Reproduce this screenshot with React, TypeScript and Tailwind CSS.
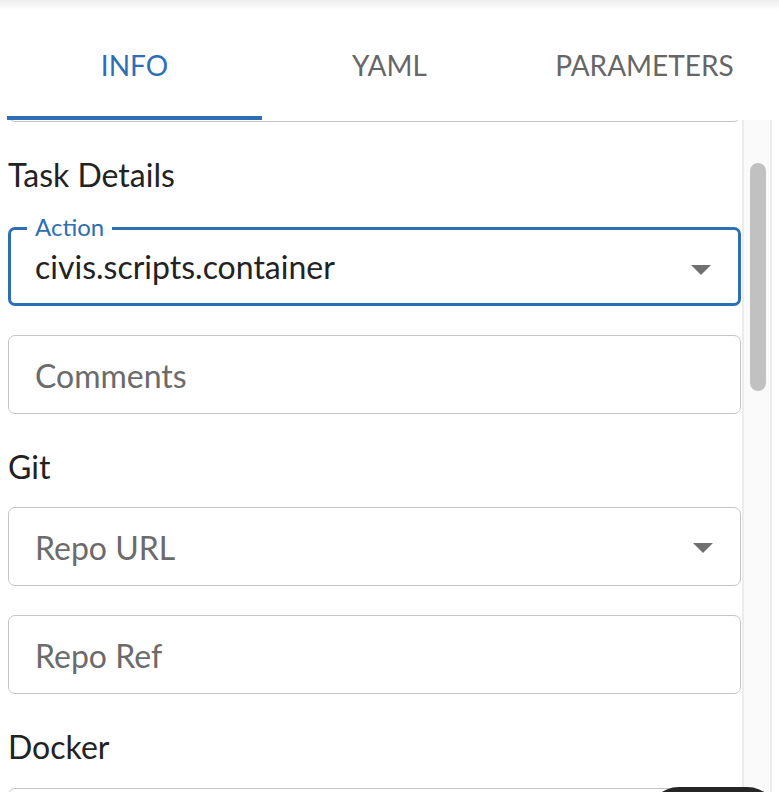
import React from 'react';

const tabs = ['INFO', 'YAML', 'PARAMETERS'];

function Caret() {
  return (
    <svg width="20" height="10" viewBox="0 0 20 10" className="absolute right-[27px] top-[35px]">
      <polygon points="0,0 20,0 10,10" fill="#707070" />
    </svg>
  );
}

interface FieldProps {
  placeholder?: string;
  value?: string;
  label?: string;
  select?: boolean;
  className?: string;
}

function Field({ placeholder, value, label, select, className = '' }: FieldProps) {
  if (label) {
    return (
      <div className={`relative h-[79px] rounded-[7px] border-[3px] border-[#2d6eb4] ${className}`}>
        <span className="absolute left-[16px] top-[-17px] bg-white px-[8px] text-[24px] leading-[28px] text-[#2d6eb4]">
          {label}
        </span>
        <div className="flex h-full items-center pl-[24px] text-[32px] text-[#222]">{value}</div>
        {select && <Caret />}
      </div>
    );
  }
  return (
    <div className={`relative h-[79px] rounded-[7px] border-[1.5px] border-[#c4c4c4] ${className}`}>
      <div className="flex h-full items-center pl-[26px] pt-[2px] text-[32px] text-[#6b6b6b]">{placeholder}</div>
      {select && <Caret />}
    </div>
  );
}

function Heading({ children, className = '' }: { children: React.ReactNode; className?: string }) {
  return <div className={`text-[32px] leading-[36px] text-[#222] ${className}`}>{children}</div>;
}

export default function App() {
  return (
    <div className="relative h-[792px] w-[779px] overflow-hidden bg-white" style={{ fontFamily: 'Lato, "Open Sans", sans-serif' }}>
      <div className="h-[10px] bg-gradient-to-b from-[#ececec] to-white" />

      <div className="flex h-[110px] pl-[7px]">
        {tabs.map((tab, i) => (
          <div key={tab} className="relative flex w-[255px] items-center justify-center">
            <span className={`text-[28px] ${i === 0 ? 'text-[#2d6eb4]' : 'text-[#666]'}`}>{tab}</span>
            {i === 0 && <div className="absolute bottom-0 left-0 h-[4px] w-full bg-[#2d6eb4]" />}
          </div>
        ))}
      </div>

      <div className="flex h-[672px]">
        <div className="flex-1 overflow-hidden pl-[8px] pr-[1px]">
          <div className="mt-[-77px] h-[79px] rounded-[7px] border-[1.5px] border-[#c4c4c4]" />
          <Heading className="mt-[35px]">Task Details</Heading>
          <Field className="mt-[34px]" label="Action" value="civis.scripts.container" select />
          <Field className="mt-[29px]" placeholder="Comments" />
          <Heading className="mt-[35px]">Git</Heading>
          <Field className="mt-[22px]" placeholder="Repo URL" select />
          <Field className="mt-[29px]" placeholder="Repo Ref" />
          <Heading className="mt-[35px]">Docker</Heading>
          <Field className="mt-[23px]" />
        </div>
        <div className="w-[37px] pr-[7px]">
          <div className="h-full border-x-[2px] border-[#ececec] bg-[#fafafa] pl-[6px] pt-[43px]">
            <div className="h-[228px] w-[16px] rounded-full bg-[#c1c1c1]" />
          </div>
        </div>
      </div>

      <div className="absolute bottom-[-60px] right-0 h-[65px] w-[132px] rounded-[32px] bg-[#262626]" />
    </div>
  );
}
